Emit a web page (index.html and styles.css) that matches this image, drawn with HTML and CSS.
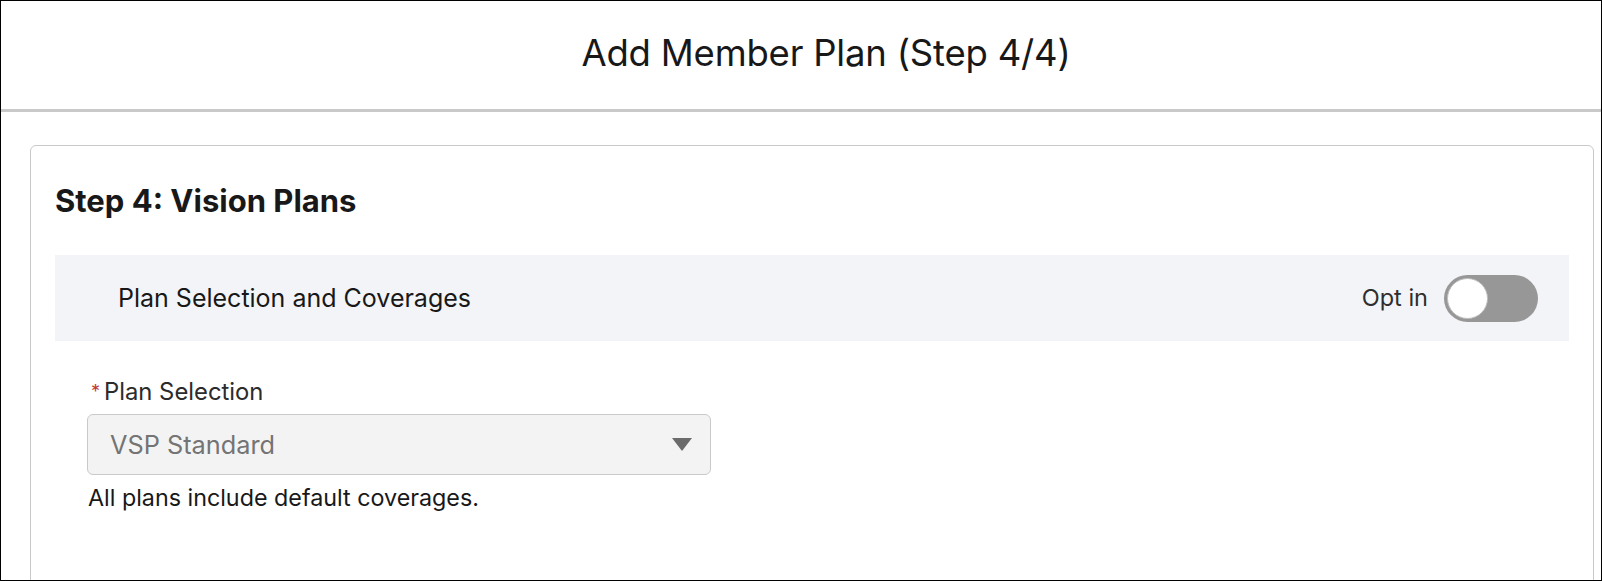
FILE: index.html
```html
<!DOCTYPE html>
<html lang="en">
<head>
<meta charset="utf-8">
<title>Add Member Plan</title>
<link rel="stylesheet" href="styles.css">
</head>
<body>
<div class="page">
  <header class="modal-header">
    <h1 class="modal-title">Add Member Plan (Step 4/4)</h1>
  </header>
  <main class="content">
    <section class="card">
      <h2 class="card-title">Step 4: Vision Plans</h2>
      <div class="band">
        <span class="band-title">Plan Selection and Coverages</span>
        <label class="optin">
          <span class="optin-label">Opt in</span>
          <span class="toggle"><span class="knob"></span></span>
        </label>
      </div>
      <div class="field">
        <div class="field-label"><abbr class="required">*</abbr>Plan Selection</div>
        <div class="select">
          <span class="select-value">VSP Standard</span>
          <svg class="caret" width="20" height="13" viewBox="0 0 20 13"><path d="M0 0H20L10 13Z" fill="#6b6b6b"/></svg>
        </div>
        <div class="help">All plans include default coverages.</div>
      </div>
    </section>
  </main>
</div>
</body>
</html>
```

FILE: styles.css
```css
* { box-sizing: border-box; }
html, body { margin: 0; padding: 0; background: #fff; }
body {
  font-family: Inter, Roboto, "Liberation Sans", sans-serif;
  color: #181818;
}
.page {
  width: 1602px;
  height: 581px;
  border: 1px solid #000;
  overflow: hidden;
}
.modal-header {
  height: 111px;
  border-bottom: 3px solid #c9c9c9;
  display: flex;
  align-items: center;
  justify-content: center;
  padding-left: 50px;
  padding-bottom: 4px;
}
.modal-title {
  margin: 0;
  font-weight: 400;
  font-size: 36.5px;
  line-height: 44px;
  letter-spacing: -0.2px;
  color: #181818;
}
.content {
  padding: 33px 7px 0 29px;
}
.card {
  border: 1px solid #c9c9c9;
  border-radius: 6px;
  padding: 40px 24px 60px 24px;
  height: 460px;
}
.card-title {
  margin: 0;
  font-size: 31px;
  line-height: 30px;
  font-weight: 700;
  color: #181818;
}
.band {
  margin-top: 39px;
  height: 86px;
  background: #f3f4f7;
  display: flex;
  align-items: center;
  justify-content: space-between;
  padding: 0 31px 0 63px;
}
.band-title {
  font-size: 25px;
  line-height: 30px;
  color: #181818;
}
.optin {
  display: flex;
  align-items: center;
  gap: 16px;
}
.optin-label {
  font-size: 23.5px;
  line-height: 28px;
  color: #2e2e2e;
}
.toggle {
  width: 94px;
  height: 47px;
  border-radius: 24px;
  background: #979797;
  padding: 3px;
  display: flex;
  align-items: center;
}
.knob {
  width: 41px;
  height: 41px;
  border-radius: 50%;
  background: #fff;
  border: 1px solid #bdbdbd;
}
.field {
  margin-top: 40px;
  padding-left: 32px;
  width: 656px;
}
.field-label {
  font-size: 23.8px;
  line-height: 22px;
  padding-left: 4px;
  color: #2b2b2b;
}
.required {
  color: #c23934;
  text-decoration: none;
  font-size: 18px;
  margin-right: 4px;
  vertical-align: 2px;
}
.select {
  margin-top: 11px;
  height: 61px;
  width: 624px;
  border: 1px solid #c9c9c9;
  border-radius: 6px;
  background: #f3f3f3;
  display: flex;
  align-items: center;
  justify-content: space-between;
  padding: 0 18px 0 22px;
}
.select-value {
  font-size: 25.3px;
  color: #747474;
}
.caret { display: block; }
.help {
  margin-top: 12px;
  font-size: 23.3px;
  line-height: 22px;
  padding-left: 1px;
  color: #181818;
}
```
